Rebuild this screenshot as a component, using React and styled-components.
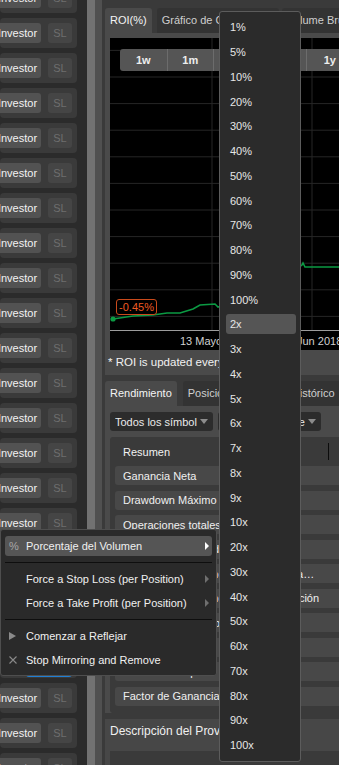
import React from 'react';
import styled, { createGlobalStyle } from 'styled-components';

const GlobalStyle = createGlobalStyle`
  body {
    margin: 0;
    background: #2b2b2b;
    font-family: "Liberation Sans", Arial, sans-serif;
    font-size: 11px;
    color: #e8e8e8;
  }
  * { box-sizing: border-box; }
`;

const Page = styled.div`
  position: relative;
  display: flex;
  width: 339px;
  height: 765px;
  overflow: hidden;
`;

/* ---------- left list of providers ---------- */

const ProviderList = styled.div`
  flex-shrink: 0;
  width: 77px;
  margin-top: -17px;
  display: flex;
  flex-direction: column;
  gap: 5px;
`;

const ProviderRow = styled.div`
  flex-shrink: 0;
  height: 30px;
  display: flex;
  align-items: center;
  justify-content: flex-end;
  gap: 7px;
  padding-right: 5px;
  background: #3a3a3a;
  border-radius: 4px;
`;

const InvestorButton = styled.div`
  flex-shrink: 0;
  width: 47px;
  height: 20px;
  line-height: 20px;
  text-align: center;
  background: #525252;
  color: #f2f2f2;
  border-radius: 3px;
  white-space: nowrap;
`;

const SlButton = styled.div`
  flex-shrink: 0;
  width: 24px;
  height: 20px;
  line-height: 20px;
  text-align: center;
  background: #454545;
  color: #6e6e6e;
  border-radius: 3px;
`;

const StartButton = styled.div`
  align-self: flex-end;
  width: 46px;
  height: 22px;
  margin-bottom: 1px;
  background: #1f7fd4;
  border-radius: 3px;
`;

const Splitter = styled.div`
  flex-shrink: 0;
  margin-left: 10px;
  width: 15px;
  background: #505050;
  border-left: 8px solid #727272;
`;

/* ---------- right side ---------- */

const Side = styled.div`
  flex: 1;
  display: flex;
  flex-direction: column;
  background: #3a3a3a;
  padding: 8px 0 0 3px;
  min-width: 0;
`;

const TabBar = styled.div`
  display: flex;
  gap: ${(p) => p.$gap}px;
  height: 25px;
  flex-shrink: 0;
`;

const Tab = styled.div`
  flex-shrink: 0;
  height: 25px;
  line-height: 25px;
  padding: 0 5px;
  border-radius: 3px 3px 0 0;
  white-space: nowrap;
  overflow: hidden;
  width: ${(p) => (p.$w ? `${p.$w}px` : 'auto')};
  background: ${(p) => (p.$active ? '#4a4a4a' : '#333333')};
  color: ${(p) => (p.$active ? '#f4f4f4' : '#cfcfcf')};
`;

const ChartPanel = styled.div`
  flex-shrink: 0;
  height: 342px;
  background: #4a4a4a;
  padding: 5px 0 0 5px;
`;

const Chart = styled.div`
  position: relative;
  height: 312px;
  background: #000;
  overflow: hidden;
`;

const RangeBar = styled.div`
  position: absolute;
  top: 11px;
  left: 10px;
  display: flex;
  height: 22px;
  background: #555;
  border-radius: 3px;
`;

const RangeButton = styled.div`
  width: 46.5px;
  line-height: 22px;
  text-align: center;
  font-weight: bold;
  color: #eee;
  border-left: ${(p) => (p.$first ? 'none' : '1px solid #6c6c6c')};
`;

const RoiBadge = styled.div`
  position: absolute;
  left: 6px;
  top: 261px;
  width: 41px;
  height: 16px;
  line-height: 14px;
  text-align: center;
  border: 1px solid #c94a1b;
  border-radius: 3px;
  background: #000;
  color: #f05a22;
`;

const Note = styled.div`
  height: 25px;
  line-height: 25px;
  margin-left: -2px;
  font-size: 11.5px;
  color: #f2f2f2;
  white-space: nowrap;
`;

const StatsPanel = styled.div`
  flex-shrink: 0;
  height: 307px;
  background: #4a4a4a;
  padding: 6px 0 0 5px;
  display: flex;
  flex-direction: column;
  gap: 6px;
`;

const FilterRow = styled.div`
  display: flex;
  gap: 5px;
  height: 19px;
  flex-shrink: 0;
`;

const Filter = styled.div`
  flex-shrink: 0;
  width: 103px;
  display: flex;
  align-items: center;
  gap: 3px;
  padding: 0 5px;
  background: #2c2c2c;
  border-radius: 3px;
`;

const FilterLabel = styled.div`
  flex: 1;
  min-width: 0;
  display: flex;
  justify-content: ${(p) => (p.$end ? 'flex-end' : 'flex-start')};
  overflow: hidden;
  white-space: nowrap;
  color: #eaeaea;
`;

const Caret = styled.div`
  flex-shrink: 0;
  width: 0;
  height: 0;
  border-left: 4.5px solid transparent;
  border-right: 4.5px solid transparent;
  border-top: 5px solid #8c8c8c;
`;

const Table = styled.div`
  flex: 1;
  background: #3a3a3a;
  border-radius: 3px 0 0 3px;
  padding: 0 0 7px 5px;
  display: flex;
  flex-direction: column;
`;

const TableHead = styled.div`
  height: 29px;
  display: flex;
  align-items: center;
  padding-left: 8px;
  flex-shrink: 0;
`;

const HeadCell = styled.div`
  width: 205px;
  color: #f2f2f2;
`;

const ColumnRule = styled.div`
  width: 1px;
  height: 17px;
  background: #0c0c0c;
`;

const StatRows = styled.div`
  display: flex;
  flex-direction: column;
  gap: 5.5px;
`;

const StatRow = styled.div`
  height: 19px;
  display: flex;
  align-items: center;
  padding-left: 8px;
  background: #484848;
  border-radius: 3px 0 0 3px;
`;

const StatLabel = styled.div`
  width: 205px;
  overflow: hidden;
  white-space: nowrap;
  color: #f0f0f0;
`;

const DescPanel = styled.div`
  flex-shrink: 0;
  margin-top: 6px;
  background: #474747;
  padding: 5px 0 0 5px;
  height: 60px;
`;

const DescTitle = styled.div`
  height: 27px;
  line-height: 14px;
  font-size: 12px;
  color: #f0f0f0;
  white-space: nowrap;
`;

const DescBody = styled.div`
  height: 30px;
  background: #3a3a3a;
`;

/* ---------- overlay menus ---------- */

const VolumeMenu = styled.div`
  position: absolute;
  left: 219px;
  top: 11px;
  width: 82px;
  padding: 3px 0;
  background: #2b2b2b;
  border: 1px solid #5c5c5c;
  border-radius: 3px;
  z-index: 5;
`;

const VolumeItem = styled.div`
  height: 24.75px;
  display: flex;
  align-items: center;
  padding: 0 4px 0 6px;
`;

const VolumePill = styled.div`
  flex: 1;
  height: 20px;
  display: flex;
  align-items: center;
  padding-left: 4px;
  border-radius: 3px;
  color: #e6e6e6;
  background: ${(p) => (p.$active ? '#555555' : 'transparent')};
`;

const ContextMenu = styled.div`
  position: absolute;
  left: 0;
  top: 529px;
  width: 217px;
  padding: 4px 0 3px;
  background: #2a2a2a;
  border: 1px solid #4e4e4e;
  border-radius: 3px;
  display: flex;
  flex-direction: column;
  z-index: 5;
`;

const MenuItem = styled.div`
  height: 20px;
  margin: 2px 4px;
  display: flex;
  align-items: center;
  border-radius: 3px;
  background: ${(p) => (p.$active ? '#555555' : 'transparent')};
  color: #f0f0f0;
  white-space: nowrap;
`;

const MenuIcon = styled.div`
  width: 21px;
  flex-shrink: 0;
  padding-left: 4px;
  display: flex;
  align-items: center;
  color: #a8a8a8;
`;

const MenuLabel = styled.div`
  flex: 1;
`;

const SubArrow = styled.div`
  width: 0;
  height: 0;
  margin-right: 3px;
  border-top: ${(p) => (p.$bright ? 4.5 : 4)}px solid transparent;
  border-bottom: ${(p) => (p.$bright ? 4.5 : 4)}px solid transparent;
  border-left: ${(p) => (p.$bright ? 4.5 : 4)}px solid ${(p) => (p.$bright ? '#ffffff' : '#6f6f6f')};
`;

const MenuSeparator = styled.div`
  height: 1px;
  margin: 4px 4px;
  background: #0e0e0e;
`;

const PlayIcon = styled.div`
  width: 0;
  height: 0;
  border-top: 4.5px solid transparent;
  border-bottom: 4.5px solid transparent;
  border-left: 7px solid #8a8a8a;
`;

const volumes = [
  '1%', '5%', '10%', '20%', '30%', '40%', '50%', '60%', '70%', '80%', '90%', '100%',
  '2x', '3x', '4x', '5x', '6x', '7x', '8x', '9x', '10x',
  '20x', '30x', '40x', '50x', '60x', '70x', '80x', '90x', '100x',
];

const stats = [
  'Ganancia Neta',
  'Drawdown Máximo',
  'Operaciones totales',
  'Operaciones ganadoras',
  'Promedio de Tenencia con Ganancia…',
  'Promedio de Tenencia de cada Posición',
  'Ganancia Promedio',
  'Pérdida Promedio',
  'Ratio de Sharpe',
  'Factor de Ganancia',
];

const gridY = Array.from({ length: 11 }, (_, i) => 12.4 + i * 26.6);

const RoiChart = () => (
  <svg width="229" height="312" style={{ display: 'block' }}>
    {gridY.map((y) => (
      <line key={y} x1="0" x2="229" y1={y} y2={y} stroke="#262626" strokeWidth="1" />
    ))}
    {[102, 202].map((x) => (
      <line key={x} x1={x} x2={x} y1="0" y2="292" stroke="#262626" strokeWidth="1" />
    ))}
    <polyline
      points="3,281 23,278 43,277 57,275 70,275 83,271 90,267 105,266 108,269 130,262 160,250 185,232 192,227 193,225 195,229 229,229"
      fill="none"
      stroke="#0b9a43"
      strokeWidth="1.6"
    />
    <circle cx="3" cy="281" r="2.6" fill="#0b9a43" />
    <line x1="0" x2="229" y1="292.5" y2="292.5" stroke="#9c9c9c" strokeWidth="1" />
    <text x="70" y="307" fill="#d0d0d0" fontSize="11" fontFamily="Liberation Sans, Arial, sans-serif">13 Mayo</text>
    <text x="187" y="307" fill="#d0d0d0" fontSize="11" fontFamily="Liberation Sans, Arial, sans-serif">Jun 2018</text>
  </svg>
);

const CrossIcon = () => (
  <svg width="8" height="8" viewBox="0 0 8 8">
    <path d="M0.5 0.5 L7.5 7.5 M7.5 0.5 L0.5 7.5" stroke="#8a8a8a" strokeWidth="1.1" />
  </svg>
);

const App = () => {
  const rows = Array.from({ length: 23 }, (_, i) => i);

  return (
    <>
      <GlobalStyle />
      <Page>
        <ProviderList>
          {rows.map((i) => (
            <ProviderRow key={i}>
              {i === 19 ? (
                <StartButton />
              ) : (
                <>
                  <InvestorButton>Investor</InvestorButton>
                  <SlButton>SL</SlButton>
                </>
              )}
            </ProviderRow>
          ))}
        </ProviderList>
        <Splitter />
        <Side>
          <TabBar $gap={5}>
            <Tab $active>ROI(%)</Tab>
            <Tab>Gráfico de Crecimiento</Tab>
            <Tab style={{ marginLeft: -2 }}>Volume Bruto</Tab>
          </TabBar>
          <ChartPanel>
            <Chart>
              <RoiChart />
              <RangeBar>
                <RangeButton $first>1w</RangeButton>
                <RangeButton>1m</RangeButton>
                <RangeButton>3m</RangeButton>
                <RangeButton>6m</RangeButton>
                <RangeButton>1y</RangeButton>
              </RangeBar>
              <RoiBadge>-0.45%</RoiBadge>
            </Chart>
            <Note>* ROI is updated every hour</Note>
          </ChartPanel>

          <TabBar $gap={6} style={{ marginTop: 6 }}>
            <Tab $active>Rendimiento</Tab>
            <Tab $w={98}>Posiciones Abiertas</Tab>
            <Tab>Histórico</Tab>
          </TabBar>
          <StatsPanel>
            <FilterRow>
              <Filter>
                <FilterLabel>Todos los símbolos</FilterLabel>
                <Caret />
              </Filter>
              <Filter>
                <FilterLabel $end>Todas las posiciones de trade</FilterLabel>
                <Caret />
              </Filter>
            </FilterRow>
            <Table>
              <TableHead>
                <HeadCell>Resumen</HeadCell>
                <ColumnRule />
              </TableHead>
              <StatRows>
                {stats.map((s) => (
                  <StatRow key={s}>
                    <StatLabel>{s}</StatLabel>
                  </StatRow>
                ))}
              </StatRows>
            </Table>
          </StatsPanel>

          <DescPanel>
            <DescTitle>Descripción del Proveedor</DescTitle>
            <DescBody />
          </DescPanel>
        </Side>

        <VolumeMenu>
          {volumes.map((v) => (
            <VolumeItem key={v}>
              <VolumePill $active={v === '2x'}>{v}</VolumePill>
            </VolumeItem>
          ))}
        </VolumeMenu>

        <ContextMenu>
          <MenuItem $active>
            <MenuIcon>%</MenuIcon>
            <MenuLabel>Porcentaje del Volumen</MenuLabel>
            <SubArrow $bright />
          </MenuItem>
          <MenuSeparator />
          <MenuItem>
            <MenuIcon />
            <MenuLabel>Force a Stop Loss (per Position)</MenuLabel>
            <SubArrow />
          </MenuItem>
          <MenuItem>
            <MenuIcon />
            <MenuLabel>Force a Take Profit (per Position)</MenuLabel>
            <SubArrow />
          </MenuItem>
          <MenuSeparator />
          <MenuItem>
            <MenuIcon>
              <PlayIcon />
            </MenuIcon>
            <MenuLabel>Comenzar a Reflejar</MenuLabel>
          </MenuItem>
          <MenuItem>
            <MenuIcon>
              <CrossIcon />
            </MenuIcon>
            <MenuLabel>Stop Mirroring and Remove</MenuLabel>
          </MenuItem>
        </ContextMenu>
      </Page>
    </>
  );
};

export default App;
